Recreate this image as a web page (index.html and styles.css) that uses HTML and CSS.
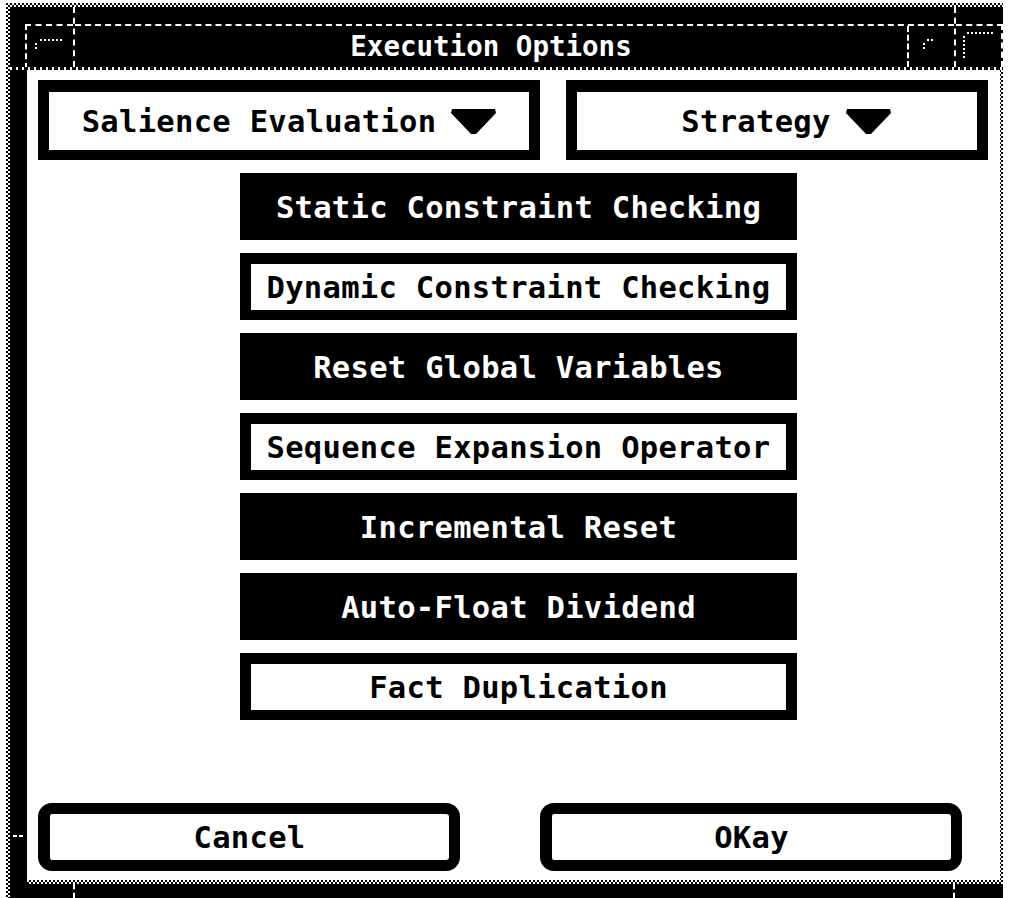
FILE: index.html
```html
<!DOCTYPE html>
<html lang="en">
<head>
    <meta charset="UTF-8">
    <title>Execution Options</title>
    <link rel="stylesheet" href="styles.css">
</head>
<body>
<div class="frame">
    <div class="titlebar">
        <div class="tb-main">
            <div class="tb-left">
                <div class="tb-menu">
                    <svg class="glyph" width="46" height="41" viewBox="0 0 46 41">
                        <path d="M13 14 H36 M9 17 V25" />
                    </svg>
                </div>
            </div>
            <div class="tb-mid">
                <div class="tb-row">
                    <div class="tb-title">Execution Options</div>
                    <div class="tb-min">
                        <svg class="glyph" width="45" height="41" viewBox="0 0 45 41">
                            <path d="M18 14 H26 M15 17 V25" />
                        </svg>
                    </div>
                </div>
            </div>
            <div class="tb-right">
                <div class="tb-max">
                    <svg class="glyph" width="45" height="41" viewBox="0 0 45 41">
                        <path d="M11 7 H37 M8 10 V33" />
                    </svg>
                </div>
            </div>
        </div>
        <div class="tb-ticks"></div>
    </div>

    <div class="body">
        <div class="side"><span class="side-mark"></span></div>
        <div class="client-wrap">
            <div class="client">
                <div class="top-row">
                    <div class="menu-btn salience">Salience Evaluation
                        <svg class="arrow" width="45" height="26" viewBox="0 0 45 26">
                            <polygon points="1,0 44,0 45,4 25,25 20,25 0,4" />
                        </svg>
                    </div>
                    <div class="menu-btn strategy">Strategy
                        <svg class="arrow" width="45" height="26" viewBox="0 0 45 26">
                            <polygon points="1,0 44,0 45,4 25,25 20,25 0,4" />
                        </svg>
                    </div>
                </div>

                <div class="options">
                    <div class="toggle on">Static Constraint Checking</div>
                    <div class="toggle">Dynamic Constraint Checking</div>
                    <div class="toggle on">Reset Global Variables</div>
                    <div class="toggle">Sequence Expansion Operator</div>
                    <div class="toggle on">Incremental Reset</div>
                    <div class="toggle on">Auto-Float Dividend</div>
                    <div class="toggle">Fact Duplication</div>
                </div>

                <div class="actions">
                    <div class="action">Cancel</div>
                    <div class="action">OKay</div>
                </div>
            </div>
        </div>
    </div>

    <div class="bottom-band">
        <span class="band-mark"></span>
        <span class="band-mark"></span>
    </div>
</div>
</body>
</html>
```

FILE: styles.css
```css
body {
    margin: 0;
    background: #fff;
    font-family: "DejaVu Sans Mono", "Liberation Mono", monospace;
    font-weight: bold;
}

/* window frame, dotted edge */
.frame {
    box-sizing: border-box;
    width: 997px;
    height: 895px;
    margin: 3px 0 0 6px;
    padding: 4px 0 0 4px;
    display: flex;
    flex-direction: column;
    background: repeating-conic-gradient(#fff 0 25%, #000 0 50%) 0 0 / 4px 4px;
}

.titlebar {
    height: 63px;
    background: #000;
    display: flex;
    flex-direction: column;
}

.tb-main {
    flex: 1;
    display: flex;
}

.tb-ticks {
    height: 3px;
    background: repeating-linear-gradient(90deg, #fff 0 2px, #000 2px 6px);
}

.tb-left {
    box-sizing: border-box;
    width: 65px;
    padding: 17px 0 0 15px;
    border-right: 2px dashed #fff;
}

.tb-menu {
    height: 100%;
    border-top: 2px dashed #fff;
    border-left: 2px dashed #fff;
}

.tb-mid {
    flex: 1;
    padding-top: 17px;
}

.tb-row {
    box-sizing: border-box;
    height: 100%;
    display: flex;
    border-top: 2px dashed #fff;
}

.tb-title {
    flex: 1;
    display: flex;
    align-items: center;
    justify-content: center;
    color: #fff;
    font-size: 27.5px;
    padding-bottom: 2px;
}

.tb-min {
    width: 45px;
    border-left: 2px dashed #fff;
}

.tb-right {
    box-sizing: border-box;
    width: 49px;
    padding-top: 17px;
    border-left: 2px dashed #fff;
}

.tb-max {
    box-sizing: border-box;
    height: 100%;
    border-top: 2px dashed #fff;
    border-right: 2px dashed #fff;
}

.glyph {
    display: block;
}

.glyph path {
    fill: none;
    stroke: #fff;
    stroke-width: 2;
    stroke-dasharray: 2 2;
}

/* body */
.body {
    height: 814px;
    display: flex;
}

.side {
    width: 17px;
    background: #000;
    display: flex;
    flex-direction: column;
}

.side-mark {
    margin: auto 2px 47px 3px;
    height: 2px;
    background: repeating-linear-gradient(90deg, #fff 0 4px, #000 4px 6px);
}

.client-wrap {
    flex: 1;
    padding: 0 3px 4px 0;
    background: repeating-conic-gradient(#fff 0 25%, #000 0 50%) 0 0 / 4px 4px;
}

.client {
    box-sizing: border-box;
    height: 810px;
    background: #fff;
    padding: 10px 12px 9px 11px;
    display: flex;
    flex-direction: column;
    color: #000;
}

.top-row {
    display: flex;
    gap: 26px;
    height: 80px;
}

.menu-btn {
    box-sizing: border-box;
    height: 80px;
    border: 11px solid #000;
    border-top-width: 12px;
    border-bottom-width: 10px;
    display: flex;
    align-items: center;
    justify-content: center;
    gap: 15px;
    font-size: 30.5px;
    letter-spacing: 0.3px;
}

.salience {
    width: 502px;
}

.strategy {
    width: 422px;
    padding-left: 18px;
}

.arrow {
    display: block;
    margin-top: 2px;
}

.arrow polygon {
    fill: #000;
}

.options {
    margin: 13px 0 0 202px;
    width: 557px;
    display: flex;
    flex-direction: column;
    gap: 13px;
}

.toggle {
    box-sizing: border-box;
    height: 67px;
    border: 11px solid #000;
    border-bottom-width: 10px;
    display: flex;
    align-items: center;
    justify-content: center;
    font-size: 30.5px;
    letter-spacing: 0.3px;
    background: #fff;
    color: #000;
    white-space: nowrap;
}

.toggle.on {
    background: #000;
    color: #fff;
}

.actions {
    margin-top: auto;
    display: flex;
    gap: 80px;
}

.action {
    box-sizing: border-box;
    width: 422px;
    height: 68px;
    border: 11px solid #000;
    border-left-width: 12px;
    border-radius: 14px;
    display: flex;
    align-items: center;
    justify-content: center;
    font-size: 30.5px;
    letter-spacing: 0.3px;
}

.bottom-band {
    height: 14px;
    background: #000;
    display: flex;
    justify-content: space-between;
    padding: 0 48px 0 63px;
}

.band-mark {
    border-left: 2px dashed #fff;
}
```
